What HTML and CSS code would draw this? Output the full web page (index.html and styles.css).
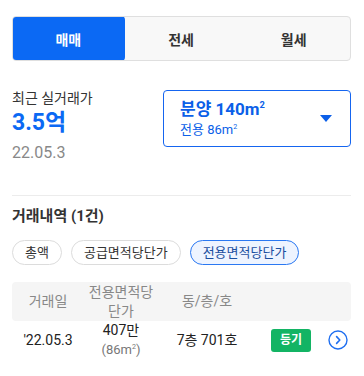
FILE: index.html
```html
<!DOCTYPE html>
<html lang="ko">
  <head>
    <meta charset="utf-8" />
    <meta name="viewport" content="width=device-width,initial-scale=1.0" />
    <title>실거래가</title>
    <link rel="stylesheet" href="styles.css">
  </head>
  <body>
    <div class="Wrap">
      <div class="Tabs">
        <button class="Tab active">매매</button>
        <button class="Tab">전세</button>
        <button class="Tab">월세</button>
      </div>

      <section class="Summary">
        <div class="Recent">
          <p class="RecentLabel">최근 실거래가</p>
          <p class="RecentPrice">3.5억</p>
          <p class="RecentDate">22.05.3</p>
        </div>
        <div class="AreaSelect">
          <div>
            <p class="AreaMain">분양 140m<sup>2</sup></p>
            <p class="AreaSub">전용 86m<sup>2</sup></p>
          </div>
          <span class="Caret"></span>
        </div>
      </section>

      <hr class="Divider" />

      <h2 class="HistoryTitle">거래내역 (1건)</h2>
      <div class="Chips">
        <span class="Chip">총액</span>
        <span class="Chip">공급면적당단가</span>
        <span class="Chip active">전용면적당단가</span>
      </div>

      <div class="Table">
        <div class="Row Head">
          <span>거래일</span>
          <span>전용면적당 단가</span>
          <span>동/층/호</span>
          <span></span>
        </div>
        <div class="Row">
          <span>'22.05.3</span>
          <span class="Price">407만<small>(86m<sup>2</sup>)</small></span>
          <span>7층 701호</span>
          <span class="Actions">
            <span class="Badge">등기</span>
            <svg class="More" width="20" height="20" viewBox="0 0 20 20">
              <circle cx="10" cy="10" r="9" fill="none" stroke="#1f6ff0" stroke-width="1.4" />
              <path d="M8.6 6.6 L11.8 10 L8.6 13.4" fill="none" stroke="#1f6ff0" stroke-width="1.6" stroke-linecap="round" stroke-linejoin="round" />
            </svg>
          </span>
        </div>
      </div>
    </div>
  </body>
</html>
```

FILE: styles.css
```css
body {
  margin: 0;
  background: #fff;
  font-family: Roboto, "Noto Sans CJK KR", sans-serif;
  color: #222;
}
p {
  margin: 0;
}
sup {
  font-size: 0.55em;
  vertical-align: 0.7em;
  line-height: 0;
}

.Wrap {
  padding: 16px 13px 0 12px;
}

.Tabs {
  display: flex;
  height: 45px;
  border: 1px solid #dfdfdf;
  border-radius: 4px;
  background: #f8f8f8;
  box-sizing: border-box;
  overflow: hidden;
}
.Tab {
  flex: 1;
  border: none;
  background: none;
  font-family: inherit;
  font-size: 14px;
  font-weight: 700;
  color: #333;
  padding: 0;
}
.Tab.active {
  background: #0b69f4;
  color: #fff;
  border-radius: 4px;
  margin: -1px 0 -1px -1px;
}

.Summary {
  display: flex;
  justify-content: space-between;
  margin-top: 29px;
}
.RecentLabel {
  font-size: 14px;
  line-height: 16px;
  color: #333;
}
.RecentPrice {
  font-size: 23px;
  line-height: 30px;
  font-weight: 700;
  color: #0b69f4;
  margin-top: 2px;
}
.RecentDate {
  font-size: 16px;
  line-height: 18px;
  color: #888;
  margin-top: 6px;
}

.AreaSelect {
  width: 188px;
  height: 57px;
  box-sizing: border-box;
  border: 1px solid #1565f0;
  border-radius: 4px;
  display: flex;
  align-items: center;
  justify-content: space-between;
  padding: 0 18px 0 16px;
  color: #0b5fe8;
}
.AreaMain {
  font-size: 17px;
  font-weight: 700;
  line-height: 22px;
}
.AreaSub {
  font-size: 13px;
  line-height: 18px;
  margin-top: 1px;
}
.Caret {
  width: 0;
  height: 0;
  border-left: 6px solid transparent;
  border-right: 6px solid transparent;
  border-top: 7px solid #0b5fe8;
}

.Divider {
  border: none;
  border-top: 1px solid #ececec;
  margin: 33px 0 0;
}

.HistoryTitle {
  margin: 10px 0 0;
  font-size: 15px;
  line-height: 20px;
  font-weight: 700;
  color: #333;
}

.Chips {
  display: flex;
  gap: 9px;
  margin-top: 14px;
}
.Chip {
  height: 25px;
  line-height: 23px;
  box-sizing: border-box;
  padding: 0 12px;
  border: 1px solid #dcdcdc;
  border-radius: 13px;
  font-size: 13px;
  color: #333;
}
.Chip.active {
  border-color: #2a78f2;
  background: #eef4ff;
  color: #1b4fa0;
}

.Table {
  margin-top: 17px;
}
.Row {
  display: grid;
  grid-template-columns: 72px 74px 98px 1fr;
  align-items: center;
  text-align: center;
  font-size: 14px;
  color: #222;
}
.Row.Head {
  background: #f5f5f5;
  border-radius: 4px;
  color: #888;
  line-height: 19px;
  height: 39px;
}
.Row:not(.Head) {
  line-height: 19px;
}
.Price small {
  display: block;
  font-size: 13px;
  color: #777;
}
.Actions {
  display: flex;
  align-items: center;
  justify-content: flex-end;
  gap: 17px;
  padding-right: 3px;
}
.Badge {
  background: #13b464;
  color: #fff;
  font-size: 12px;
  font-weight: 700;
  border-radius: 3px;
  width: 40px;
  height: 23px;
  line-height: 23px;
}
.More {
  display: block;
}
```
